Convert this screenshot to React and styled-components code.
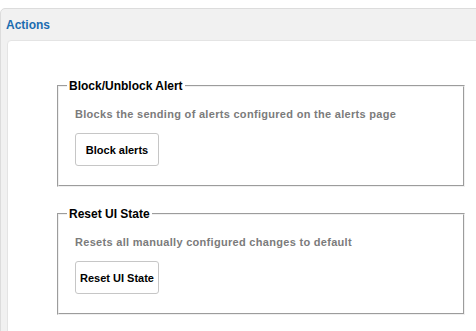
import React from 'react'
import styled, { createGlobalStyle } from 'styled-components'

const GlobalStyle = createGlobalStyle`
  html, body {
    margin: 0;
    padding: 0;
    overflow: hidden;
    background: #ffffff;
  }
  body {
    font-family: "Liberation Sans", Arial, sans-serif;
  }
`

const Panel = styled.div`
  margin-top: 8px;
  margin-right: -24px;
  height: 340px;
  background: #f1f1f1;
  border: 1px solid #dcdcdc;
  border-radius: 5px;
  display: flex;
  flex-direction: column;
`

const PanelTitle = styled.h2`
  margin: 0;
  padding: 9px 5px 8px;
  font-size: 12px;
  line-height: 14px;
  font-weight: bold;
  color: #1b6cb0;
`

const PanelBody = styled.div`
  flex: 1;
  margin-left: 6px;
  padding: 38px 0 0 49px;
  background: #ffffff;
  border: 1px solid #e4e4e4;
  border-radius: 4px 0 0 0;
  display: flex;
  flex-direction: column;
  gap: 20px;
`

const Group = styled.fieldset`
  box-sizing: border-box;
  width: 408px;
  margin: 0;
  padding: 4px 8px 7px;
  border: 2px groove #f0f0f0;
  font-size: 12px;
`

const Legend = styled.legend`
  padding: 0 2px;
  font-size: 12px;
  line-height: 14px;
  font-weight: bold;
  color: #000000;
`

const Description = styled.p`
  margin: 11px 0 12px 8px;
  font-size: 11px;
  line-height: 13px;
  font-weight: bold;
  letter-spacing: 0.3px;
  color: #7b7b7b;
`

const ButtonRow = styled.div`
  display: flex;
  margin: 0 0 12px 8px;
`

const Button = styled.button`
  box-sizing: border-box;
  width: 84px;
  height: 33px;
  padding: 0;
  background: #ffffff;
  border: 1px solid #c6c6c6;
  border-radius: 3px;
  font-family: "Liberation Sans", Arial, sans-serif;
  font-size: 11px;
  font-weight: bold;
  color: #000000;
  text-align: center;
  cursor: pointer;
`

const actions = [
  {
    title: 'Block/Unblock Alert',
    text: 'Blocks the sending of alerts configured on the alerts page',
    label: 'Block alerts',
  },
  {
    title: 'Reset UI State',
    text: 'Resets all manually configured changes to default',
    label: 'Reset UI State',
  },
]

const App = () => {
  return (
    <>
      <GlobalStyle />
      <Panel>
        <PanelTitle>Actions</PanelTitle>
        <PanelBody>
          {actions.map((a) => (
            <Group key={a.title}>
              <Legend>{a.title}</Legend>
              <Description>{a.text}</Description>
              <ButtonRow>
                <Button type='button'>{a.label}</Button>
              </ButtonRow>
            </Group>
          ))}
        </PanelBody>
      </Panel>
    </>
  )
}

export default App
